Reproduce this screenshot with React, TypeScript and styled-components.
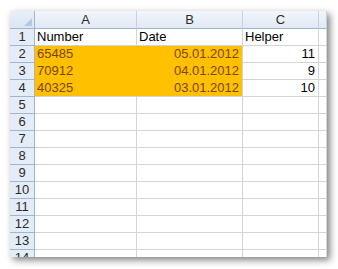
import * as React from "react";
import styled, { createGlobalStyle } from "styled-components";

const GlobalStyle = createGlobalStyle`
  body {
    margin: 0;
    background: #ffffff;
  }
`;

const Page = styled.div`
  padding: 11px 0 0 10px;
  width: 338px;
  height: 269px;
  box-sizing: border-box;
`;

const Sheet = styled.div`
  width: 317px;
  height: 246px;
  overflow: hidden;
  background: #ffffff;
  box-shadow: 3px 3px 7px rgba(0, 0, 0, 0.5);
  display: grid;
  grid-template-columns: 25px 102px 106px 76px 8px;
  grid-template-rows: 18px;
  grid-auto-rows: 17px;
  font-family: "Liberation Sans", Arial, sans-serif;
  font-size: 13px;
  color: #000000;
`;

const Corner = styled.div`
  position: relative;
  box-sizing: border-box;
  background: linear-gradient(#e9eff8, #dbe5f3);
  border-right: 1px solid #9eb6ce;
  border-bottom: 1px solid #9eb6ce;

  &::after {
    content: "";
    position: absolute;
    right: 2px;
    bottom: 2px;
    border-left: 8px solid transparent;
    border-bottom: 8px solid #b6c8dd;
  }
`;

const ColHead = styled.div`
  box-sizing: border-box;
  background: linear-gradient(#f3f6fb, #e1e9f5);
  border-right: 1px solid #c5d1e0;
  border-bottom: 1px solid #9eb6ce;
  display: flex;
  align-items: center;
  justify-content: center;
  color: #2b2b2b;
`;

const RowHead = styled.div`
  box-sizing: border-box;
  background: #e4ecf7;
  border-right: 1px solid #9eb6ce;
  border-bottom: 1px solid #9eb6ce;
  display: flex;
  align-items: flex-end;
  justify-content: center;
  padding-bottom: 1px;
  color: #2b2b2b;
`;

const Cell = styled.div<{ $align?: "left" | "right"; $fill?: boolean; $last?: boolean; $lastRow?: boolean }>`
  box-sizing: border-box;
  background: ${(p) => (p.$fill ? "#ffc000" : "#ffffff")};
  border-right: 1px solid ${(p) => (p.$fill && !p.$last ? "#ffc000" : "#d4d4d4")};
  border-bottom: 1px solid ${(p) => (p.$fill && !p.$lastRow ? "#ffc000" : "#d4d4d4")};
  display: flex;
  align-items: flex-end;
  justify-content: ${(p) => (p.$align === "right" ? "flex-end" : "flex-start")};
  padding: 0 3px 1px 2px;
  color: ${(p) => (p.$fill ? "#7a4500" : "#000000")};
  white-space: nowrap;
  overflow: hidden;
`;

interface Row {
  number: string;
  date: string;
  helper: string;
}

const rows: Row[] = [
  { number: "65485", date: "05.01.2012", helper: "11" },
  { number: "70912", date: "04.01.2012", helper: "9" },
  { number: "40325", date: "03.01.2012", helper: "10" },
];

const App = () => {
  const empty = Array.from({ length: 10 }, (_, i) => i + 5);

  return (
    <Page>
      <GlobalStyle />
      <Sheet>
        <Corner />
        <ColHead>A</ColHead>
        <ColHead>B</ColHead>
        <ColHead>C</ColHead>
        <ColHead />

        <RowHead>1</RowHead>
        <Cell>Number</Cell>
        <Cell>Date</Cell>
        <Cell>Helper</Cell>
        <Cell />

        {rows.map((r, i) => (
          <React.Fragment key={r.number}>
            <RowHead>{i + 2}</RowHead>
            <Cell $fill $lastRow={i === rows.length - 1}>{r.number}</Cell>
            <Cell $fill $last $lastRow={i === rows.length - 1} $align="right">
              {r.date}
            </Cell>
            <Cell $align="right">{r.helper}</Cell>
            <Cell />
          </React.Fragment>
        ))}

        {empty.map((n) => (
          <React.Fragment key={n}>
            <RowHead>{n}</RowHead>
            <Cell />
            <Cell />
            <Cell />
            <Cell />
          </React.Fragment>
        ))}
      </Sheet>
    </Page>
  );
};

export default App;
